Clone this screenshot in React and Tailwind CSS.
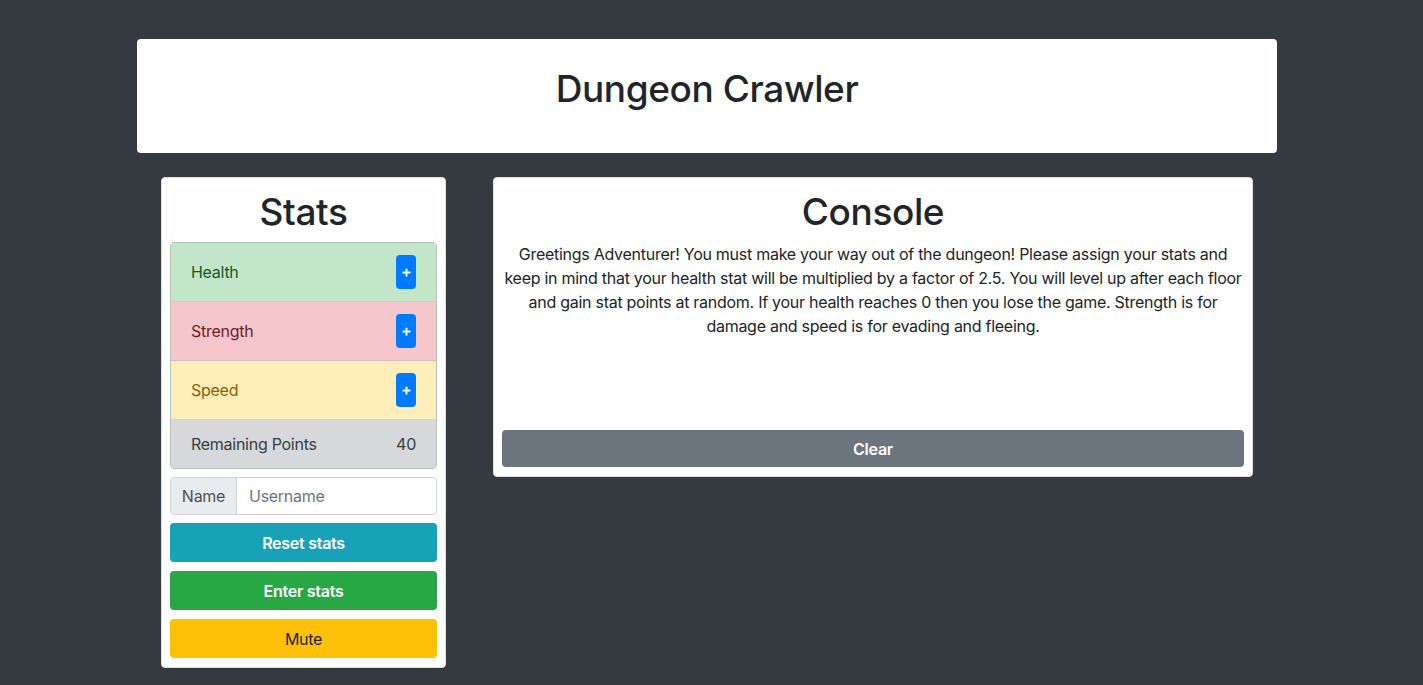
import { Plus } from 'lucide-react';

const StatRow = ({ label, className }) => (
  <div className={`flex items-center justify-between h-[59px] pl-[20px] pr-[20px] border-b ${className}`}>
    <span className="text-[16px]">{label}</span>
    <button className="w-[20px] h-[34px] rounded-[4px] bg-[#007bff] text-white flex items-center justify-center">
      <Plus className="h-[11px] w-[11px]" strokeWidth={4} />
    </button>
  </div>
);

const App = () => {
  return (
    <div
      className="min-h-screen bg-[#343a40] pt-[39px] text-[#212529] tracking-[-0.27px]"
      style={{ fontFamily: 'Inter, "Liberation Sans", Arial, sans-serif' }}
    >
      <div className="ml-[137px] w-[1140px] h-[114px] bg-white rounded-[4px] flex items-center justify-center pb-[15px]">
        <h1 className="text-[37px] font-medium leading-none tracking-[-0.4px]">Dungeon Crawler</h1>
      </div>

      <div className="flex items-start mt-[24px] ml-[161px] gap-[47px]">
        {/* Stats */}
        <div className="w-[285px] bg-white rounded-[4px] border border-[#dfdfdf] px-[8px] pt-[4px] pb-[9px]">
          <h2 className="text-[37px] font-medium text-center leading-[60px] tracking-[-0.4px]">Stats</h2>
          <div className="rounded-[4px] overflow-hidden border border-[#b8c2bb]">
            <StatRow label="Health" className="bg-[#c3e6cb] text-[#155724] border-[#b1dfbb]" />
            <StatRow label="Strength" className="bg-[#f5c6cb] text-[#721c24] border-[#e0b6bb]" />
            <StatRow label="Speed" className="bg-[#ffeeba] text-[#856404] border-[#e6d6a8]" />
            <div className="flex items-center justify-between h-[48px] px-[20px] bg-[#d6d8db] text-[#383d41]">
              <span className="text-[16px]">Remaining Points</span>
              <span className="text-[16px]">40</span>
            </div>
          </div>
          <div className="flex mt-[8px] h-[38px] rounded-[4px] border border-[#ced4da] overflow-hidden">
            <div className="w-[66px] bg-[#e9ecef] border-r border-[#ced4da] flex items-center justify-center text-[16px] text-[#495057]">
              Name
            </div>
            <input
              placeholder="Username"
              className="flex-1 min-w-0 px-[12px] text-[16px] outline-none placeholder:text-[#6c757d]"
            />
          </div>
          <button className="mt-[8px] w-full h-[39px] rounded-[4px] bg-[#17a2b8] text-white text-[16px] font-semibold">
            Reset stats
          </button>
          <button className="mt-[9px] w-full h-[39px] rounded-[4px] bg-[#28a745] text-white text-[16px] font-semibold">
            Enter stats
          </button>
          <button className="mt-[9px] w-full h-[39px] rounded-[4px] bg-[#ffc107] text-[#212529] text-[16px]">
            Mute
          </button>
        </div>

        {/* Console */}
        <div className="w-[760px] bg-white rounded-[4px] border border-[#dfdfdf] px-[8px] pt-[4px] pb-[9px]">
          <h2 className="text-[37px] font-medium text-center leading-[60px] tracking-[-0.4px]">Console</h2>
          <p className="text-[16px] leading-[24px] text-center h-[188px]">
            Greetings Adventurer! You must make your way out of the dungeon! Please assign your stats and
            keep in mind that your health stat will be multiplied by a factor of 2.5. You will level up after each floor
            and gain stat points at random. If your health reaches 0 then you lose the game. Strength is for
            damage and speed is for evading and fleeing.
          </p>
          <button className="w-full h-[37px] rounded-[4px] bg-[#6c757d] text-white text-[16px] font-semibold">
            Clear
          </button>
        </div>
      </div>
    </div>
  );
};

export default App;
